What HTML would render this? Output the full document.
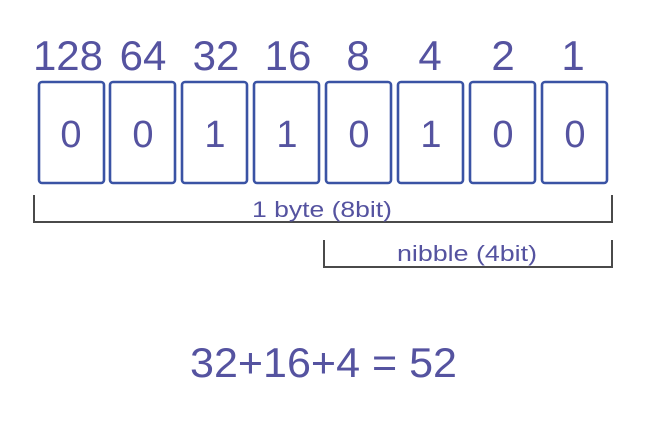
<!DOCTYPE html>
<html><head><meta charset="utf-8"><style>html,body{margin:0;padding:0;background:#fff;}svg{display:block}</style></head>
<body>
<svg width="660" height="433" viewBox="0 0 660 433" xmlns="http://www.w3.org/2000/svg" font-family="Liberation Sans, sans-serif" fill="#5553a0">
<g font-size="42" text-anchor="middle">
<text x="68" y="70">128</text><text x="143" y="70">64</text><text x="216" y="70">32</text><text x="288" y="70">16</text>
<text x="358" y="70">8</text><text x="430" y="70">4</text><text x="503" y="70">2</text><text x="573" y="70">1</text>
</g>
<g fill="none" stroke="#3a53a4" stroke-width="2.6">
<rect x="39" y="82" width="65" height="101" rx="3"/>
<rect x="110" y="82" width="65" height="101" rx="3"/>
<rect x="182" y="82" width="65" height="101" rx="3"/>
<rect x="254" y="82" width="65" height="101" rx="3"/>
<rect x="326" y="82" width="65" height="101" rx="3"/>
<rect x="398" y="82" width="65" height="101" rx="3"/>
<rect x="470" y="82" width="65" height="101" rx="3"/>
<rect x="542" y="82" width="65" height="101" rx="3"/>
</g>
<g font-size="38" text-anchor="middle">
<text x="71" y="147">0</text><text x="143" y="147">0</text><text x="215" y="147">1</text><text x="287" y="147">1</text>
<text x="359" y="147">0</text><text x="431" y="147">1</text><text x="503" y="147">0</text><text x="575" y="147">0</text>
</g>
<g fill="none" stroke="#4a4a4a" stroke-width="2">
<path d="M34 195V222H612V195"/>
<path d="M324 240V267H612V240"/>
</g>
<g font-size="22">
<text x="252" y="217" textLength="140" lengthAdjust="spacingAndGlyphs">1 byte (8bit)</text>
<text x="397" y="261" textLength="140" lengthAdjust="spacingAndGlyphs">nibble (4bit)</text>
</g>
<text x="190" y="377" font-size="42" textLength="267" lengthAdjust="spacingAndGlyphs">32+16+4 = 52</text>
</svg>
</body></html>
